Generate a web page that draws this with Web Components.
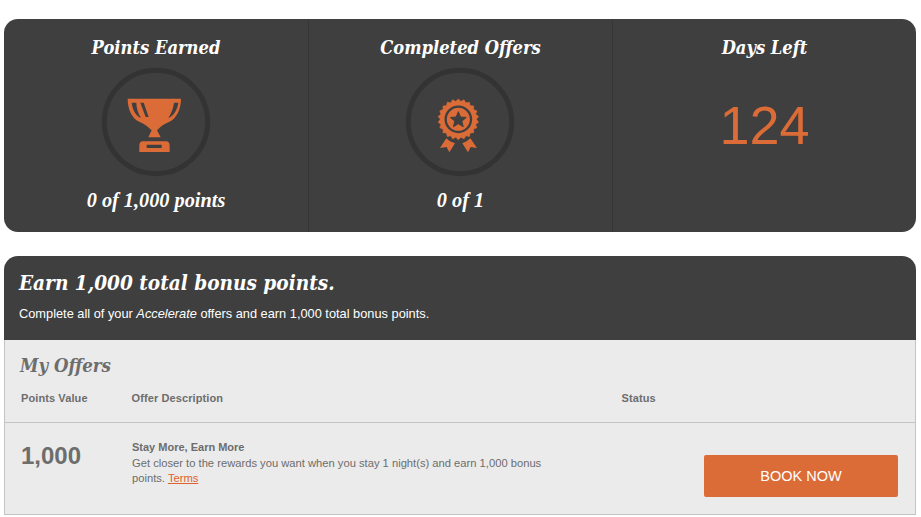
<!DOCTYPE html>
<html>
<head>
<meta charset="utf-8">
<title>Accelerate</title>
<style>
  html, body { margin: 0; background: #fff; }
  body {
    padding: 19px 5px 0 4px;
    font-family: "Liberation Sans", Arial, sans-serif;
  }
</style>
</head>
<body>
<stat-board>
  <stat-panel heading="Points Earned" note="0 of 1,000 points"><ring-icon kind="trophy"></ring-icon></stat-panel>
  <stat-panel heading="Completed Offers" note="0 of 1"><ring-icon kind="medal"></ring-icon></stat-panel>
  <stat-panel heading="Days Left"><days-count>124</days-count></stat-panel>
</stat-board>

<offers-card heading="Earn 1,000 total bonus points.">
  <span slot="intro">Complete all of your <em>Accelerate</em> offers and earn 1,000 total bonus points.</span>
  <offer-row points="1,000" name="Stay More, Earn More">
    Get closer to the rewards you want when you stay 1 night(s) and earn 1,000 bonus points.
  </offer-row>
</offers-card>

<script>
// 상단 통계 카드
class StatBoard extends HTMLElement {
  constructor() {
    super();
    this.attachShadow({ mode: 'open' });
    this.shadowRoot.innerHTML = `
      <style>
        :host {
          display: grid;
          grid-template-columns: 304px 304px 304px;
          height: 213px;
          background: #3f3f3f;
          border-radius: 14px;
          overflow: hidden;
        }
      </style>
      <slot></slot>
    `;
  }
}

class StatPanel extends HTMLElement {
  constructor() {
    super();
    this.attachShadow({ mode: 'open' });
    this.shadowRoot.innerHTML = `
      <style>
        :host {
          display: flex;
          flex-direction: column;
          align-items: center;
          border-left: 1px solid #363636;
          color: #fff;
        }
        :host(:first-child) { border-left: none; }
        .heading {
          margin-top: 15px;
          height: 27px;
          font: italic bold 18.2px/27px "DejaVu Serif Condensed", "DejaVu Serif", serif;
        }
        .body {
          height: 114px;
          margin-top: 6px;
          display: flex;
          align-items: flex-start;
          justify-content: center;
        }
        .note {
          margin-top: 7px;
          font: italic bold 20.3px/24px "Liberation Serif", serif;
        }
      </style>
      <div class="heading"></div>
      <div class="body"><slot></slot></div>
      <div class="note"></div>
    `;
  }

  connectedCallback() {
    this.shadowRoot.querySelector('.heading').textContent = this.getAttribute('heading') || '';
    this.shadowRoot.querySelector('.note').textContent = this.getAttribute('note') || '';
  }
}

// 원형 링 + 아이콘
class RingIcon extends HTMLElement {
  constructor() {
    super();
    this.attachShadow({ mode: 'open' });
  }

  connectedCallback() {
    const kind = this.getAttribute('kind');
    const glyph = kind === 'trophy' ? this.trophy() : this.medal();
    const cx = kind === 'trophy' ? 183 : 180;
    this.shadowRoot.innerHTML = `
      <style>
        :host { display: block; width: 110px; height: 110px; }
        :host([kind="medal"]) { margin-left: -2px; }
        svg { display: block; }
      </style>
      <svg width="110" height="110" viewBox="${cx - 165} 15 330 330">
        <circle cx="${cx}" cy="180" r="154" fill="none" stroke="#db6c37" stroke-opacity=".35" stroke-width="3"/>
        <circle cx="${cx}" cy="180" r="155" fill="none" stroke="#333" stroke-width="15"/>
        ${glyph}
      </svg>
    `;
  }

  trophy() {
    return `<path fill="#db6c37" fill-rule="evenodd" d="M98 110H258C258 140 245 170 222 180C205 187 195 195 186 205L197 226H160L170 205C160 195 150 187 134 180C110 170 98 140 98 110Z
      M110 122L124 122C124 140 130 155 138 168C120 160 112 140 110 122Z
      M136 122L146 122L161 165L152 165Z
      M250 122L237 122C235 140 228 155 220 168C238 160 248 140 250 122Z"/>
      <path fill="#db6c37" fill-rule="evenodd" d="M143 238H213Q223 238 224 250V270H133V250Q134 238 143 238Z M155 248V258H200V248Z"/>`;
  }

  medal() {
    // 톱니 모양 테두리
    const bumps = 22;
    let edge = '';
    for (let i = 0; i < bumps * 2; i++) {
      const a = (i / (bumps * 2)) * Math.PI * 2;
      const r = i % 2 ? 54 : 61;
      edge += `${i ? 'L' : 'M'}${(175 + r * Math.sin(a)).toFixed(1)} ${(172 - r * Math.cos(a)).toFixed(1)}`;
    }
    let star = '';
    for (let i = 0; i < 10; i++) {
      const a = (i / 10) * Math.PI * 2;
      const r = i % 2 ? 11 : 25;
      star += `${i ? 'L' : 'M'}${(175 + r * Math.sin(a)).toFixed(1)} ${(174 - r * Math.cos(a)).toFixed(1)}`;
    }
    return `<path fill="#db6c37" stroke="#db6c37" stroke-width="2" stroke-linejoin="round" d="${edge}Z"/>
      <circle cx="175" cy="172" r="38" fill="#db6c37" stroke="#3f3f3f" stroke-width="7"/>
      <path fill="#3f3f3f" stroke="#3f3f3f" stroke-width="3" stroke-linejoin="round" d="${star}Z"/>
      <path fill="#db6c37" d="M139 229L150 238L165 244L148 271L140 255L120 258Z"/>
      <path fill="#db6c37" d="M211 229L200 238L187 244L204 271L212 255L231 258Z"/>`;
  }
}

class DaysCount extends HTMLElement {
  constructor() {
    super();
    this.attachShadow({ mode: 'open' });
    this.shadowRoot.innerHTML = `
      <style>
        :host {
          display: block;
          margin-top: 27px;
          color: #db6c37;
          font: 54px/62px "Liberation Sans", Arial, sans-serif;
        }
      </style>
      <slot></slot>
    `;
  }
}

// 하단 오퍼 카드
class OffersCard extends HTMLElement {
  constructor() {
    super();
    this.attachShadow({ mode: 'open' });
    this.shadowRoot.innerHTML = `
      <style>
        :host { display: block; margin-top: 24px; }
        .banner {
          height: 84px;
          box-sizing: border-box;
          padding: 13px 16px 0 15px;
          background: #3f3f3f;
          border-radius: 14px 14px 0 0;
          color: #fff;
        }
        h2 {
          margin: 0;
          font: italic bold 20.6px/28px "DejaVu Serif Condensed", "DejaVu Serif", serif;
        }
        p {
          margin: 9px 0 0;
          font-size: 12.8px;
          line-height: 16px;
        }
        .panel {
          background: #ebebeb;
          border: 1px solid #c4c4c4;
          border-top: none;
          height: 175px;
          box-sizing: border-box;
          color: #6d6d6d;
        }
        h3 {
          margin: 0;
          padding: 13px 0 0 15px;
          height: 25px;
          font: italic bold 18.5px/26px "DejaVu Serif Condensed", "DejaVu Serif", serif;
        }
        .cols {
          display: grid;
          grid-template-columns: 110.5px 490px 1fr;
          padding: 13px 0 0 16px;
          height: 45px;
          box-sizing: border-box;
          border-bottom: 1px solid #c4c4c4;
          font-size: 11px;
          font-weight: bold;
          line-height: 14px;
          letter-spacing: .1px;
        }
      </style>
      <div class="banner">
        <h2></h2>
        <p><slot name="intro"></slot></p>
      </div>
      <div class="panel">
        <h3>My Offers</h3>
        <div class="cols">
          <span>Points Value</span>
          <span>Offer Description</span>
          <span>Status</span>
        </div>
        <slot></slot>
      </div>
    `;
  }

  connectedCallback() {
    this.shadowRoot.querySelector('h2').textContent = this.getAttribute('heading') || '';
  }
}

class OfferRow extends HTMLElement {
  constructor() {
    super();
    this.attachShadow({ mode: 'open' });
    this.shadowRoot.innerHTML = `
      <style>
        :host {
          display: flex;
          align-items: flex-start;
          padding: 16px 17px 0 16px;
          color: #6d6d6d;
        }
        .points {
          width: 111px;
          flex: none;
          padding-top: 1px;
          font-size: 24px;
          font-weight: bold;
          line-height: 32px;
        }
        .info {
          width: 415px;
          flex: none;
          font-size: 11.2px;
          line-height: 15px;
        }
        .name { font-size: 11px; font-weight: bold; line-height: 17px; }
        a { color: #e0622c; text-decoration: underline; }
        button {
          margin: 16px 0 0 auto;
          width: 194px;
          height: 42px;
          border: none;
          border-radius: 2px;
          background: #db6c37;
          color: #fff;
          font: 14.5px "Liberation Sans", Arial, sans-serif;
          cursor: pointer;
        }
      </style>
      <div class="points"></div>
      <div class="info">
        <div class="name"></div>
        <slot></slot> <a href="#">Terms</a>
      </div>
      <button>BOOK NOW</button>
    `;
  }

  connectedCallback() {
    this.shadowRoot.querySelector('.points').textContent = this.getAttribute('points') || '';
    this.shadowRoot.querySelector('.name').textContent = this.getAttribute('name') || '';
  }
}

customElements.define('stat-board', StatBoard);
customElements.define('stat-panel', StatPanel);
customElements.define('ring-icon', RingIcon);
customElements.define('days-count', DaysCount);
customElements.define('offers-card', OffersCard);
customElements.define('offer-row', OfferRow);
</script>
</body>
</html>
